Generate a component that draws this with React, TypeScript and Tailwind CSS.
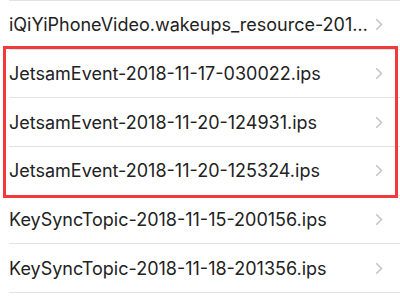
const rows = [
  "iQiYiPhoneVideo.wakeups_resource-201…",
  "JetsamEvent-2018-11-17-030022.ips",
  "JetsamEvent-2018-11-20-124931.ips",
  "JetsamEvent-2018-11-20-125324.ips",
  "KeySyncTopic-2018-11-15-200156.ips",
  "KeySyncTopic-2018-11-18-201356.ips",
];

export default function App() {
  return (
    <div className="relative h-[300px] w-[400px] overflow-hidden bg-white" style={{ fontFamily: "Inter, 'Liberation Sans', sans-serif" }}>
      <div className="ml-[9px] border-t border-[#e3e3e6]">
        {rows.map((name) => (
          <Row key={name} name={name} />
        ))}
      </div>

      {/* highlight annotation */}
      <div className="pointer-events-none absolute left-[3px] top-[46px] h-[152px] w-[395px] border-[3px] border-[#f23a3a]" />
    </div>
  );
}

function Row({ name }: { name: string }) {
  return (
    <div className="flex h-[48.67px] items-center border-b border-[#e3e3e6] pr-[17px]">
      <span className="min-w-0 flex-1 whitespace-nowrap pr-[8px] text-[18px] text-[#222]">{name}</span>
      <svg width="8" height="13" viewBox="0 0 8 13" className="shrink-0">
        <path d="M1.2 1.2 L6.5 6.5 L1.2 11.8" fill="none" stroke="#c6c6ca" strokeWidth="1.6" />
      </svg>
    </div>
  );
}
